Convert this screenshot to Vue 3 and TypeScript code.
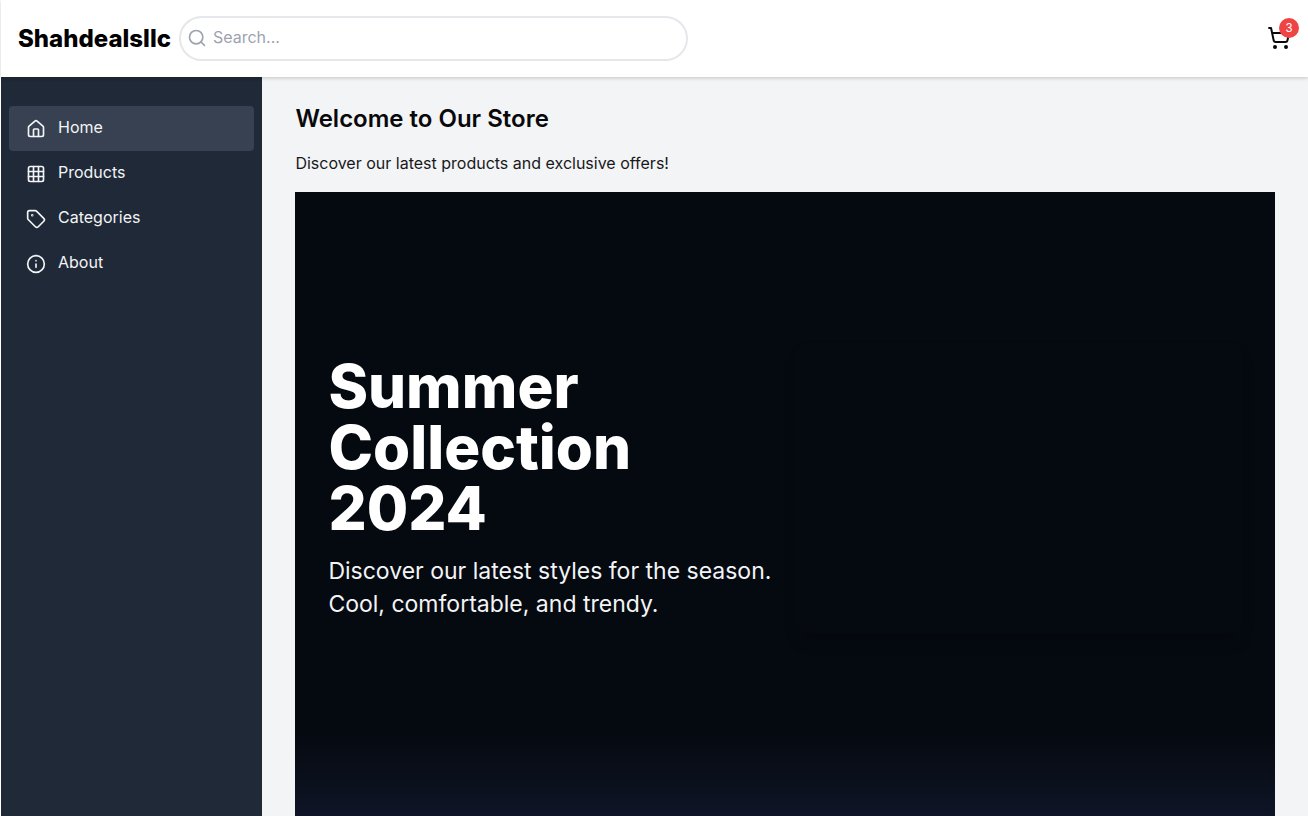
<script setup lang="ts">
import { ref } from 'vue'

type IconName = 'home' | 'grid' | 'tag' | 'info'

interface NavItem {
  label: string
  icon: IconName
}

const navItems: NavItem[] = [
  { label: 'Home', icon: 'home' },
  { label: 'Products', icon: 'grid' },
  { label: 'Categories', icon: 'tag' },
  { label: 'About', icon: 'info' },
]

const active = ref('Home')
const query = ref('')
const cartCount = ref(3)
</script>

<template>
  <div class="page">
    <header class="topbar">
      <h1 class="brand">Shahdealsllc</h1>
      <label class="search">
        <svg class="search-icon" viewBox="0 0 24 24" aria-hidden="true">
          <circle cx="11" cy="11" r="8" />
          <path d="m21 21-4.3-4.3" />
        </svg>
        <input v-model="query" type="search" placeholder="Search..." aria-label="Search" />
      </label>
      <button class="cart" type="button" aria-label="Shopping cart">
        <svg class="cart-icon" viewBox="0 0 24 24" aria-hidden="true">
          <circle cx="8" cy="21" r="1" />
          <circle cx="19" cy="21" r="1" />
          <path d="M2.05 2.05h2l2.66 12.42a2 2 0 0 0 2 1.58h9.78a2 2 0 0 0 1.95-1.57l1.65-7.43H5.12" />
        </svg>
        <span class="badge">{{ cartCount }}</span>
      </button>
    </header>

    <div class="body">
      <nav class="sidebar" aria-label="Main">
        <a
          v-for="item in navItems"
          :key="item.label"
          href="#"
          class="nav-link"
          :class="{ active: active === item.label }"
          @click.prevent="active = item.label"
        >
          <svg class="nav-icon" viewBox="0 0 24 24" aria-hidden="true">
            <template v-if="item.icon === 'home'">
              <path d="M15 21v-8a1 1 0 0 0-1-1h-4a1 1 0 0 0-1 1v8" />
              <path d="M3 10a2 2 0 0 1 .709-1.528l7-5.999a2 2 0 0 1 2.582 0l7 5.999A2 2 0 0 1 21 10v9a2 2 0 0 1-2 2H5a2 2 0 0 1-2-2z" />
            </template>
            <template v-else-if="item.icon === 'grid'">
              <rect x="3" y="3" width="18" height="18" rx="2" />
              <path d="M3 9h18M3 15h18M9 3v18M15 3v18" />
            </template>
            <template v-else-if="item.icon === 'tag'">
              <path d="M12.586 2.586A2 2 0 0 0 11.172 2H4a2 2 0 0 0-2 2v7.172a2 2 0 0 0 .586 1.414l8.704 8.704a2.426 2.426 0 0 0 3.42 0l6.58-6.58a2.426 2.426 0 0 0 0-3.42z" />
              <circle cx="7.5" cy="7.5" r=".5" />
            </template>
            <template v-else>
              <circle cx="12" cy="12" r="10" />
              <path d="M12 16v-4M12 8h.01" />
            </template>
          </svg>
          <span class="nav-label">{{ item.label }}</span>
        </a>
      </nav>

      <main class="content">
        <h2 class="welcome">Welcome to Our Store</h2>
        <p class="intro">Discover our latest products and exclusive offers!</p>
        <section class="hero">
          <div class="hero-copy">
            <h2 class="hero-title">Summer Collection 2024</h2>
            <p class="hero-text">Discover our latest styles for the season. Cool, comfortable, and trendy.</p>
          </div>
          <div class="hero-media"></div>
        </section>
      </main>
    </div>
  </div>
</template>

<style>
body {
  background: #fff;
  overflow: hidden;
}
</style>

<style scoped>
.page {
  box-sizing: border-box;
  height: 100vh;
  padding-left: 1px;
  display: flex;
  flex-direction: column;
  font-family: Inter, "Liberation Sans", sans-serif;
  font-size: 16px;
  line-height: 25px;
  color: #09090b;
}

.page *,
.page *::before {
  box-sizing: border-box;
}

h1,
h2,
p {
  margin: 0;
}

svg {
  fill: none;
  stroke: currentColor;
  stroke-width: 2;
  stroke-linecap: round;
  stroke-linejoin: round;
  flex: none;
}

.topbar {
  position: relative;
  z-index: 1;
  display: flex;
  align-items: center;
  gap: 8px;
  padding: 16px 17px;
  background: #fff;
  box-shadow: 0 1px 4px rgba(0, 0, 0, 0.2);
}

.brand {
  font-size: 24px;
  line-height: 32px;
  font-weight: 800;
  color: #000;
}

.search {
  display: flex;
  align-items: center;
  gap: 6px;
  width: 40%;
  height: 45px;
  padding: 0 6px 2px;
  border: 2px solid #e5e7eb;
  border-radius: 24px;
}

.search-icon {
  width: 20px;
  height: 20px;
  color: #9ca3af;
}

.search input {
  flex: 1;
  min-width: 0;
  padding: 0;
  border: 0;
  outline: 0;
  background: transparent;
  font: inherit;
  color: #09090b;
}

.search input::placeholder {
  color: #9ca3af;
  opacity: 1;
}

.cart {
  position: relative;
  display: flex;
  margin-left: auto;
  padding: 0 0 2px;
  border: 0;
  background: none;
  color: #09090b;
}

.cart-icon {
  width: 24px;
  height: 24px;
}

.badge {
  position: absolute;
  top: -8px;
  right: -8px;
  width: 20px;
  height: 20px;
  border-radius: 50%;
  background: #ef4444;
  color: #fff;
  font-size: 12px;
  line-height: 20px;
  text-align: center;
}

.body {
  flex: 1;
  min-height: 0;
  display: flex;
}

.sidebar {
  flex: none;
  width: 20%;
  padding: 29px 8px;
  background: #1f2937;
}

.nav-link {
  display: flex;
  align-items: center;
  gap: 12px;
  height: 45px;
  padding: 0 17px;
  border-radius: 4px;
  color: #f3f4f6;
  text-decoration: none;
}

.nav-link.active {
  background: #374151;
}

.nav-icon {
  width: 20px;
  height: 20px;
}

.nav-label {
  padding-bottom: 2px;
}

.content {
  flex: 1;
  min-width: 0;
  padding: 25px 33px 0;
  background: #f3f4f6;
}

.welcome {
  margin-bottom: 16px;
  font-size: 24px;
  line-height: 33px;
  font-weight: 600;
}

.intro {
  margin-bottom: 16px;
  color: #18181b;
}

.hero {
  display: grid;
  grid-template-columns: 1fr 1fr;
  align-items: center;
  gap: 24px;
  height: 640px;
  padding: 0 33px 48px;
  background: linear-gradient(#050910 540px, #10172a 640px);
}

.hero-title {
  max-width: 360px;
  margin-bottom: 16px;
  font-size: 60px;
  line-height: 61px;
  font-weight: 800;
  color: #fff;
}

.hero-text {
  font-size: 23px;
  line-height: 33px;
  color: #f3f4f6;
}

.hero-media {
  height: 290px;
  border-radius: 12px;
  box-shadow: 0 10px 15px rgba(0, 0, 0, 0.1);
}
</style>
